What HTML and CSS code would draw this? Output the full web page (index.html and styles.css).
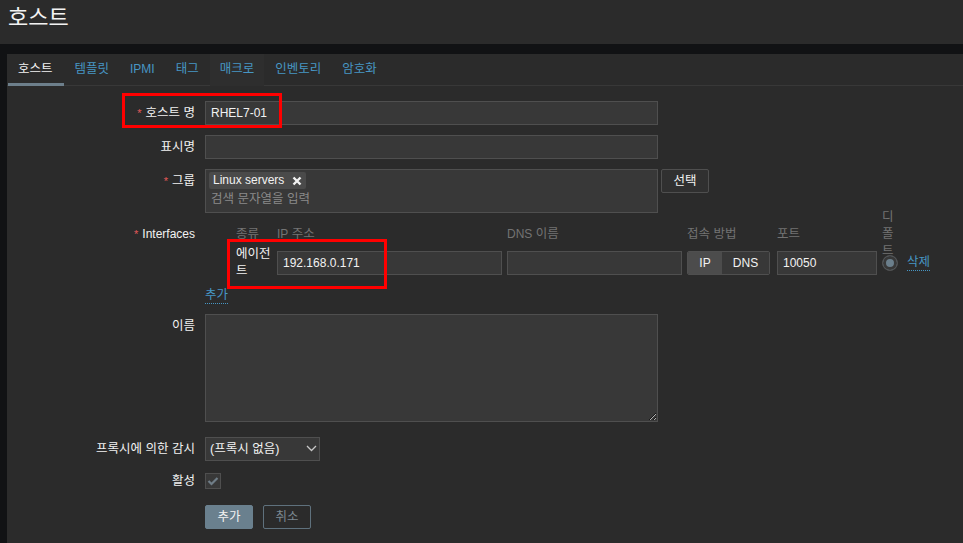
FILE: index.html
```html
<!DOCTYPE html>
<html lang="ko">
<head>
<meta charset="utf-8">
<title>호스트</title>
<link rel="stylesheet" href="styles.css">
</head>
<body>
<header class="page-header"><h1>호스트</h1></header>
<main class="panel">
  <nav class="tabs">
    <a class="tab active">호스트</a>
    <a class="tab">템플릿</a>
    <a class="tab lat">IPMI</a>
    <a class="tab">태그</a>
    <a class="tab hover">매크로</a>
    <a class="tab">인벤토리</a>
    <a class="tab">암호화</a>
  </nav>
  <form class="form">
    <div class="row r-host">
      <label class="lbl"><span class="req">*</span>호스트 명</label>
      <div class="field"><input class="text wide" type="text" value="RHEL7-01"></div>
    </div>
    <div class="row r-gap10">
      <label class="lbl">표시명</label>
      <div class="field"><input class="text wide" type="text" value=""></div>
    </div>
    <div class="row r-gap10">
      <label class="lbl"><span class="req">*</span>그룹</label>
      <div class="field group-field">
        <div class="multiselect">
          <div class="tags"><span class="tag lat">Linux servers<svg class="tag-x" width="10" height="10" viewBox="0 0 10 10"><path d="M1.5 1.5 L8.5 8.5 M8.5 1.5 L1.5 8.5" stroke="#f2f2f2" stroke-width="2.4" stroke-linecap="butt"/></svg></span></div>
          <div class="placeholder">검색 문자열을 입력</div>
        </div>
        <button class="btn-select" type="button">선택</button>
      </div>
    </div>
    <div class="row r-gap10">
      <label class="lbl lbl-if"><span class="req">*</span><span class="lat">Interfaces</span></label>
      <div class="field">
        <div class="if-grid if-head">
          <span></span>
          <span>종류</span>
          <span><span class="lat">IP</span> 주소</span>
          <span><span class="lat">DNS</span> 이름</span>
          <span>접속 방법</span>
          <span>포트</span>
          <span class="col-default">디폴트</span>
          <span></span>
        </div>
        <div class="if-grid if-row">
          <span></span>
          <span class="if-type">에이전트</span>
          <input class="text ip" type="text" value="192.168.0.171">
          <input class="text dns" type="text" value="">
          <span class="toggle lat"><span class="tg on">IP</span><span class="tg">DNS</span></span>
          <input class="text port" type="text" value="10050">
          <span class="radio"></span>
          <a class="link del">삭제</a>
        </div>
        <div class="if-add"><a class="link">추가</a></div>
      </div>
    </div>
    <div class="row r-gap10">
      <label class="lbl">이름</label>
      <div class="field"><textarea class="area"></textarea></div>
    </div>
    <div class="row r-proxy">
      <label class="lbl">프록시에 의한 감시</label>
      <div class="field">
        <span class="select-wrap">
          <select class="select"><option>(프록시 없음)</option></select>
          <svg class="chev" width="11" height="7" viewBox="0 0 11 7"><path d="M1 1 L5.5 5.5 L10 1" fill="none" stroke="#c8c8c8" stroke-width="1.3"/></svg>
        </span>
      </div>
    </div>
    <div class="row r-active">
      <label class="lbl lbl-small">활성</label>
      <div class="field">
        <span class="check"><svg width="12" height="10" viewBox="0 0 12 10"><path d="M1.5 5 L4.5 8 L10.5 2" fill="none" stroke="#6f7d87" stroke-width="2.2"/></svg></span>
      </div>
    </div>
    <div class="row r-buttons">
      <span></span>
      <div class="field buttons">
        <button class="btn-main" type="button">추가</button>
        <button class="btn-alt" type="button">취소</button>
      </div>
    </div>
  </form>
</main>
<div class="mark mark-host"></div>
<div class="mark mark-agent"></div>
</body>
</html>
```

FILE: styles.css
```css
* { box-sizing: border-box; }

body {
  margin: 0;
  height: 543px;
  overflow: hidden;
  position: relative;
  background: #111214;
  color: #f2f2f2;
  font-family: "Liberation Sans", "Noto Sans CJK KR", sans-serif;
  font-size: 12.5px;
  line-height: 14px;
}

.lat { font-size: 12px; }

.page-header {
  height: 44px;
  background: #2b2b2b;
  padding-left: 8px;
}

.page-header h1 {
  margin: 0;
  padding-top: 6px;
  font-size: 22px;
  line-height: 24px;
  font-weight: normal;
  color: #f2f2f2;
}

.panel {
  margin: 10px 0 0 7px;
  height: 489px;
  background: #2b2b2b;
}

.tabs {
  display: flex;
  gap: 1px;
  border-bottom: 1px solid #383838;
  padding-left: 1px;
}

.tab {
  display: block;
  padding: 8px 10px 7px;
  line-height: 14px;
  border-bottom: 3px solid transparent;
  margin-bottom: -1px;
  color: #4796c4;
  cursor: pointer;
}

.tab.active {
  color: #f2f2f2;
  border-bottom-color: #6d7f8b;
  padding-right: 11px;
}

.tab.hover { background: #2e2e2e; }

.form {
  padding-top: 15px;
}

.row {
  display: grid;
  grid-template-columns: 188px 1fr;
  column-gap: 10px;
}

.r-gap10 { margin-top: 10px; }
.r-proxy { margin-top: 15px; }
.r-active { margin-top: 12px; }
.r-buttons { margin-top: 16px; }

.lbl {
  text-align: right;
  line-height: 24px;
  color: #f2f2f2;
  white-space: nowrap;
}

.lbl-if { line-height: 22px; }
.lbl-small { line-height: 16px; }

.req {
  color: #e45959;
  margin-right: 4px;
  font-size: 11px;
}

.text {
  height: 24px;
  border: 1px solid #4f4f4f;
  background: #383838;
  color: #f2f2f2;
  font-family: inherit;
  font-size: 12px;
  padding: 0 5px;
  outline: none;
}

.wide { width: 453px; }

.group-field {
  display: flex;
  align-items: flex-start;
  gap: 3px;
}

.multiselect {
  width: 453px;
  height: 44px;
  border: 1px solid #4f4f4f;
  background: #383838;
  padding: 2px 3px 0;
}

.tags { height: 18px; }

.tag {
  display: inline-flex;
  align-items: center;
  height: 17px;
  padding: 0 4px 0 4px;
  background: #4a4a4a;
  border-radius: 2px;
  color: #f2f2f2;
  line-height: 17px;
}

.tag-x { margin-left: 8px; }

.placeholder {
  color: #8a8a8a;
  line-height: 18px;
  padding-left: 2px;
}

.btn-select {
  width: 48px;
  height: 24px;
  background: #303030;
  border: 1px solid #4f4f4f;
  border-radius: 2px;
  color: #f2f2f2;
  font: inherit;
  padding: 0;
}

.if-grid {
  display: grid;
  grid-template-columns: 31px 41px 230px 180px 90px 105px 25px auto;
  align-items: center;
}

.if-head {
  height: 22px;
  color: #737373;
}

.col-default {
  width: 17px;
  line-height: 17px;
  align-self: start;
  margin: -14px 0 -15px;
}

.if-row {
  height: 36px;
}

.if-type {
  width: 38px;
  line-height: 17px;
}

.ip { width: 225px; }
.dns { width: 175px; }
.port { width: 100px; }

.toggle {
  display: flex;
  width: 83px;
  height: 24px;
  border: 1px solid #4f4f4f;
  border-radius: 2px;
  overflow: hidden;
}

.tg {
  flex: 1;
  display: flex;
  align-items: center;
  justify-content: center;
  background: #383838;
  color: #f2f2f2;
}

.tg.on {
  flex: 0 0 34px;
  background: #4c4c4c;
}

.radio {
  width: 16px;
  height: 16px;
  border-radius: 50%;
  border: 1px solid #4f4f4f;
  background: #6b7f8c;
  box-shadow: inset 0 0 0 3px #383838;
}

.link {
  color: #4796c4;
  border-bottom: 1px dotted #4796c4;
  line-height: 15px;
  cursor: pointer;
}

.del { justify-self: start; }

.if-add {
  height: 23px;
  padding-top: 7px;
}

.if-add .link { display: inline-block; }

.area {
  display: block;
  width: 453px;
  height: 108px;
  border: 1px solid #4f4f4f;
  background: #383838;
  color: #f2f2f2;
  font: inherit;
  outline: none;
  resize: both;
}

.select-wrap {
  display: inline-block;
  position: relative;
}

.select {
  appearance: none;
  -webkit-appearance: none;
  display: block;
  width: 115px;
  height: 24px;
  border: 1px solid #4f4f4f;
  background: #383838;
  color: #f2f2f2;
  font: inherit;
  padding: 0 4px;
  outline: none;
}

.chev {
  position: absolute;
  right: 3px;
  top: 8px;
  pointer-events: none;
}

.check {
  display: flex;
  align-items: center;
  justify-content: center;
  width: 16px;
  height: 16px;
  border: 1px solid #4f4f4f;
  background: #383838;
}

.buttons {
  display: flex;
  gap: 10px;
}

.btn-main, .btn-alt {
  width: 48px;
  height: 24px;
  border-radius: 2px;
  font: inherit;
  padding: 0;
}

.btn-main {
  background: #6a808e;
  border: 1px solid #6a808e;
  color: #f2f2f2;
}

.btn-alt {
  background: transparent;
  border: 1px solid #5f717d;
  color: #7c8891;
}

.mark {
  position: absolute;
  border: 3px solid #ff0000;
  pointer-events: none;
}

.mark-host {
  left: 122px;
  top: 93px;
  width: 160px;
  height: 35px;
}

.mark-agent {
  left: 227px;
  top: 239px;
  width: 160px;
  height: 50px;
}
```
